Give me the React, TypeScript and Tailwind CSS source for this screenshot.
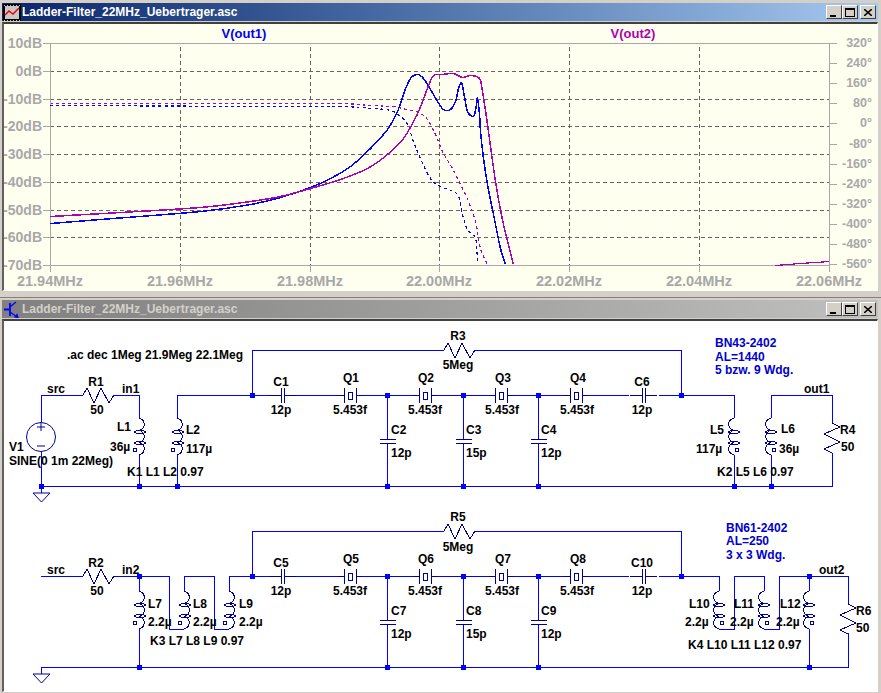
import type { ReactNode } from "react";

const WIRE = "#0000ff";
const PART = "#000090";
const NOTE = "#0000d0";
const AXIS = "#a8a8a8";
const GRID = "#646464";

type Pt = [number, number];

function smooth(pts: Pt[]) {
  let d = `M${pts[0][0]} ${pts[0][1]}`;
  for (let i = 0; i < pts.length - 1; i++) {
    const p0 = pts[Math.max(i - 1, 0)];
    const p1 = pts[i];
    const p2 = pts[i + 1];
    const p3 = pts[Math.min(i + 2, pts.length - 1)];
    const c1x = p1[0] + (p2[0] - p0[0]) / 6;
    const c1y = p1[1] + (p2[1] - p0[1]) / 6;
    const c2x = p2[0] - (p3[0] - p1[0]) / 6;
    const c2y = p2[1] - (p3[1] - p1[1]) / 6;
    d += ` C${c1x} ${c1y} ${c2x} ${c2y} ${p2[0]} ${p2[1]}`;
  }
  return d;
}

const blueDb: Pt[] = [[50, 222], [100, 218], [200, 210], [250, 203], [280, 196], [310, 186], [330, 177], [350, 165], [370, 147], [387, 128], [397, 110], [404, 90], [410, 77], [417, 73], [423, 77], [430, 88], [437, 100], [443, 108], [450, 108], [455, 100], [458, 87], [461, 81], [463, 90], [467, 110], [472, 115], [474, 113], [476, 103], [477, 97], [479, 113], [480, 130], [483, 157], [487, 183], [493, 213], [500, 247], [505, 263]];
const magentaDb: Pt[] = [[50, 215], [120, 211], [200, 206], [250, 200], [280, 195], [310, 187], [340, 178], [367, 167], [387, 153], [403, 137], [413, 120], [419, 108], [427, 87], [433, 74], [442, 73], [453, 72], [462, 76], [470, 74], [479, 77], [482, 90], [487, 123], [495, 180], [503, 223], [513, 263]];
const magentaPhase: Pt[] = [[50, 102], [280, 102], [340, 102], [370, 104], [393, 105], [402, 107], [418, 111], [427, 118], [435, 133], [442, 150], [452, 167], [462, 187], [468, 200], [475, 220], [480, 247], [487, 263]];
const bluePhase: Pt[] = [[50, 104], [280, 105], [340, 105], [373, 107], [390, 109], [400, 115], [407, 123], [413, 140], [419, 155], [430, 177], [440, 185], [457, 193], [462, 213], [467, 228], [475, 237], [477, 262]];

const dbLabels = ["10dB", "0dB", "-10dB", "-20dB", "-30dB", "-40dB", "-50dB", "-60dB", "-70dB"];
const phaseLabels = ["320°", "240°", "160°", "80°", "0°", "-80°", "-160°", "-240°", "-320°", "-400°", "-480°", "-560°"];
const freqLabels = ["21.94MHz", "21.96MHz", "21.98MHz", "22.00MHz", "22.02MHz", "22.04MHz", "22.06MHz"];

function Plot() {
  return (
    <svg width={873} height={266} viewBox="4 23 873 266" className="block font-['Liberation_Sans',sans-serif] font-bold">
      <g shapeRendering="crispEdges" fill="none">
        {dbLabels.map((_, i) => {
          const y = Math.round(42 + i * 27.75);
          const edge = i === 0 || i === 8;
          return (
            <g key={i}>
              <line x1={43} x2={50} y1={y} y2={y} stroke={AXIS} />
              <line x1={50} x2={829} y1={y} y2={y} stroke={edge ? AXIS : GRID} strokeDasharray={edge ? undefined : "4 3"} />
            </g>
          );
        })}
        {freqLabels.map((_, i) => {
          const x = Math.round(50 + i * 129.83);
          const edge = i === 0 || i === 6;
          return (
            <g key={i}>
              <line x1={x} x2={x} y1={264} y2={271} stroke={AXIS} />
              <line x1={x} x2={x} y1={edge ? 42 : 46} y2={264} stroke={edge ? AXIS : GRID} strokeDasharray={edge ? undefined : "4 3"} />
            </g>
          );
        })}
        {phaseLabels.map((_, i) => {
          const y = Math.round(42 + i * 20.1);
          return <line key={i} x1={829} x2={837} y1={y} y2={y} stroke={AXIS} />;
        })}
      </g>
      <g fill="none" shapeRendering="crispEdges" transform="translate(0.5 0.5)">
        <path d={smooth(bluePhase)} stroke="#0000ff" strokeWidth={1.2} strokeDasharray="3 3" />
        <path d={smooth(magentaPhase)} stroke="#b000b0" strokeWidth={1.2} strokeDasharray="3 3" />
        <path d={smooth(blueDb)} stroke="#0000ff" strokeWidth={1.5} />
        <path d={smooth(magentaDb)} stroke="#b000b0" strokeWidth={1.5} />
        <path d="M775 264 L800 262 L829 260" stroke="#b000b0" strokeWidth={1.2} />
      </g>
      {dbLabels.map((t, i) => (
        <text key={t} x={42} y={Math.round(42 + i * 27.75)} textAnchor="end" dominantBaseline="central" fontSize={14} fill={AXIS}>{t}</text>
      ))}
      {phaseLabels.map((t, i) => (
        <text key={t} x={872} y={Math.round(42 + i * 20.1)} textAnchor="end" dominantBaseline="central" fontSize={12.5} fill={AXIS}>{t}</text>
      ))}
      {freqLabels.map((t, i) => (
        <text key={t} x={Math.round(50 + i * 129.83)} y={280} textAnchor="middle" dominantBaseline="central" fontSize={14.5} fill={AXIS}>{t}</text>
      ))}
      <text x={244} y={32} textAnchor="middle" dominantBaseline="central" fontSize={13} fill="#0000ff">V(out1)</text>
      <text x={633} y={32} textAnchor="middle" dominantBaseline="central" fontSize={13} fill="#b000b0">V(out2)</text>
    </svg>
  );
}

function Junction({ x, y }: { x: number; y: number }) {
  return <rect x={x - 2} y={y - 2} width={5} height={5} fill={WIRE} />;
}

function Label({ x, y, c, note, children }: { x: number; y: number; c?: boolean; note?: boolean; children: ReactNode }) {
  return (
    <text x={x} y={y} textAnchor={c ? "middle" : "start"} dominantBaseline="central" fill={note ? NOTE : "#000"}>
      {children}
    </text>
  );
}

function ResistorH({ x, y }: { x: number; y: number }) {
  const p = [[0, 0], [4, -7], [11, 8], [18, -7], [26, 8], [31, 0]].map(([a, b]) => `${x + a},${y + b}`).join(" ");
  return <polyline points={p} fill="none" stroke={PART} shapeRendering="crispEdges" />;
}

function ResistorV({ x, y }: { x: number; y: number }) {
  const p = [[0, 0], [8, 4], [-8, 11], [8, 19], [-8, 26], [0, 30]].map(([a, b]) => `${x + a},${y + b}`).join(" ");
  return <polyline points={p} fill="none" stroke={PART} shapeRendering="crispEdges" />;
}

function Crystal({ x, y }: { x: number; y: number }) {
  return (
    <g fill="none" stroke={PART}>
      <line x1={x - 6} x2={x - 6} y1={y - 7} y2={y + 8} />
      <line x1={x + 6} x2={x + 6} y1={y - 7} y2={y + 8} />
      <rect x={x - 2} y={y - 3} width={4} height={7} />
      <line x1={x - 12} x2={x - 6} y1={y} y2={y} />
      <line x1={x + 6} x2={x + 12} y1={y} y2={y} />
    </g>
  );
}

function CapH({ x, y }: { x: number; y: number }) {
  return (
    <g stroke={PART} fill="none">
      <line x1={x - 1} x2={x - 1} y1={y - 7} y2={y + 8} />
      <line x1={x + 2} x2={x + 2} y1={y - 7} y2={y + 8} />
      <line x1={x - 13} x2={x - 1} y1={y} y2={y} />
      <line x1={x + 2} x2={x + 14} y1={y} y2={y} />
    </g>
  );
}

function CapV({ x, y }: { x: number; y: number }) {
  return (
    <g stroke={PART} fill="none">
      <line x1={x - 7} x2={x + 9} y1={y} y2={y} />
      <line x1={x - 7} x2={x + 9} y1={y + 4} y2={y + 4} />
    </g>
  );
}

// coil with the two coupling lenses and the phase dot, y = top of the winding
function Coil({ x, y, dir, h = 37 }: { x: number; y: number; dir: 1 | -1; h?: number }) {
  const s = h / 3;
  const sweep = dir === 1 ? 1 : 0;
  const arcs = [0, 1, 2].map((i) => `M${x} ${y + i * s} A8 ${s / 2 + 0.4} 0 0 ${sweep} ${x} ${y + (i + 1) * s}`).join(" ");
  const lx1 = dir === 1 ? x - 5 : x - 6;
  const lx2 = dir === 1 ? x + 7 : x + 6;
  const mid = (lx1 + lx2) / 2;
  const ly1 = y + 14;
  const ly2 = y + 25;
  const dotX = dir === 1 ? x - 4 : x + 3;
  return (
    <g fill="none" stroke={PART} shapeRendering="crispEdges">
      <path d={arcs} />
      <path d={`M${lx1} ${ly1} Q${mid} ${ly1 - 4} ${lx2} ${ly1} Q${mid} ${ly1 + 4} ${lx1} ${ly1}`} />
      <path d={`M${lx1} ${ly2} Q${mid} ${ly2 - 4} ${lx2} ${ly2} Q${mid} ${ly2 + 4} ${lx1} ${ly2}`} />
      <circle cx={dotX} cy={y + 32} r={1.7} />
    </g>
  );
}

const wires = [
  "M41 421V394H83", "M113 394H139V417", "M139 454V485", "M41 451V492", "M41 485H832V452", "M177 485V454", "M177 417V394H269",
  "M252 394V349H444", "M475 349H681V394", "M295 394H338", "M362 394H413", "M437 394H489", "M513 394H564", "M588 394H629", "M659 394H734V417",
  "M734 454V485", "M771 485V454", "M771 417V394H832V422",
  "M387 394V438", "M387 442V485", "M463 394V438", "M463 442V485", "M538 394V438", "M538 442V485",
  "M41 575H83", "M113 575H169V628H184", "M139 575V590", "M139 628V666", "M184 590V575H214V628H229", "M229 590V575H269",
  "M41 673V666H848V632", "M848 603V575H779V628H764", "M764 590V575H734V628H719", "M719 590V575H659",
  "M252 575V530H444", "M475 530H681V575", "M295 575H338", "M362 575H413", "M437 575H489", "M513 575H564", "M588 575H629",
  "M387 575V619", "M387 623V666", "M463 575V619", "M463 623V666", "M538 575V619", "M538 623V666",
  "M809 575V590", "M809 628V666",
];

const junctions: Pt[] = [
  [41, 485], [139, 485], [177, 485], [387, 485], [463, 485], [538, 485], [734, 485], [771, 485],
  [252, 394], [387, 394], [463, 394], [538, 394], [681, 394],
  [139, 575], [252, 575], [387, 575], [463, 575], [538, 575], [681, 575], [809, 575],
  [139, 666], [387, 666], [463, 666], [538, 666], [809, 666],
];

const crystals = [350, 425, 501, 576];
const shunts = [387, 463, 538];

function Schematic() {
  return (
    <svg width={873} height={370} viewBox="4 320 873 370" className="block font-['Liberation_Sans',sans-serif] font-bold text-[12px]">
      <g shapeRendering="crispEdges">
        <path d={wires.join(" ")} fill="none" stroke={WIRE} />
        {junctions.map(([x, y]) => <Junction key={`${x}-${y}`} x={x} y={y} />)}
        {[394, 575].map((y) => crystals.map((x) => <Crystal key={`${x}-${y}`} x={x} y={y} />))}
        {[282, 643].map((x) => [394, 575].map((y) => <CapH key={`${x}-${y}`} x={x} y={y} />))}
        {shunts.map((x) => [438, 619].map((y) => <CapV key={`${x}-${y}`} x={x} y={y} />))}
      </g>
      <ResistorH x={83} y={394} />
      <ResistorH x={83} y={575} />
      <ResistorH x={444} y={349} />
      <ResistorH x={444} y={530} />
      <ResistorV x={832} y={422} />
      <ResistorV x={848} y={603} />
      <Coil x={139} y={417} dir={1} />
      <Coil x={177} y={417} dir={1} />
      <Coil x={734} y={417} dir={-1} />
      <Coil x={771} y={417} dir={-1} />
      <Coil x={139} y={590} dir={1} h={38} />
      <Coil x={184} y={590} dir={1} h={38} />
      <Coil x={229} y={590} dir={1} h={38} />
      <Coil x={719} y={590} dir={-1} h={38} />
      <Coil x={764} y={590} dir={-1} h={38} />
      <Coil x={809} y={590} dir={-1} h={38} />

      <g fill="none" stroke={PART}>
        <circle cx={41} cy={436} r={14.5} />
        <path d="M37 426H45M41 422V430M37 445H45" />
        <path d="M33 492H50L41.5 501Z" />
        <path d="M33 673H50L41.5 682Z" />
      </g>

      <Label x={67} y={354}>.ac dec 1Meg 21.9Meg 22.1Meg</Label>
      <Label x={47} y={388}>src</Label>
      <Label x={96} y={381} c>R1</Label>
      <Label x={97} y={409} c>50</Label>
      <Label x={122} y={388}>in1</Label>
      <Label x={117} y={426}>L1</Label>
      <Label x={110} y={446}>36µ</Label>
      <Label x={186} y={429}>L2</Label>
      <Label x={186} y={448}>117µ</Label>
      <Label x={9} y={446}>V1</Label>
      <Label x={9} y={460}>SINE(0 1m 22Meg)</Label>
      <Label x={127} y={471}>K1 L1 L2 0.97</Label>
      <Label x={281} y={381} c>C1</Label>
      <Label x={281} y={409} c>12p</Label>
      <Label x={458} y={335} c>R3</Label>
      <Label x={458} y={364} c>5Meg</Label>
      <Label x={642} y={381} c>C6</Label>
      <Label x={642} y={409} c>12p</Label>
      {[["Q1", 351], ["Q2", 426], ["Q3", 503], ["Q4", 578]].map(([t, x]) => (
        <g key={t}>
          <Label x={x as number} y={377} c>{t}</Label>
          <Label x={(x as number) - 1} y={409} c>5.453f</Label>
        </g>
      ))}
      {[["C2", "12p", 391], ["C3", "15p", 466], ["C4", "12p", 541]].map(([t, v, x]) => (
        <g key={t}>
          <Label x={x as number} y={429}>{t}</Label>
          <Label x={x as number} y={452}>{v}</Label>
        </g>
      ))}
      <Label x={710} y={429}>L5</Label>
      <Label x={696} y={448}>117µ</Label>
      <Label x={781} y={428}>L6</Label>
      <Label x={779} y={448}>36µ</Label>
      <Label x={840} y={429}>R4</Label>
      <Label x={841} y={446}>50</Label>
      <Label x={804} y={388}>out1</Label>
      <Label x={717} y={471}>K2 L5 L6 0.97</Label>
      <Label x={715} y={342} note>BN43-2402</Label>
      <Label x={715} y={356} note>AL=1440</Label>
      <Label x={715} y={369} note>5 bzw. 9 Wdg.</Label>

      <Label x={47} y={569}>src</Label>
      <Label x={96} y={562} c>R2</Label>
      <Label x={97} y={590} c>50</Label>
      <Label x={122} y={569}>in2</Label>
      {[["L7", 148], ["L8", 193], ["L9", 239]].map(([t, x]) => (
        <g key={t}>
          <Label x={x as number} y={603}>{t}</Label>
          <Label x={x as number} y={621}>2.2µ</Label>
        </g>
      ))}
      <Label x={150} y={640}>K3 L7 L8 L9 0.97</Label>
      <Label x={281} y={562} c>C5</Label>
      <Label x={281} y={590} c>12p</Label>
      <Label x={458} y={516} c>R5</Label>
      <Label x={458} y={546} c>5Meg</Label>
      <Label x={642} y={562} c>C10</Label>
      <Label x={642} y={590} c>12p</Label>
      {[["Q5", 351], ["Q6", 426], ["Q7", 503], ["Q8", 578]].map(([t, x]) => (
        <g key={t}>
          <Label x={x as number} y={558} c>{t}</Label>
          <Label x={(x as number) - 1} y={590} c>5.453f</Label>
        </g>
      ))}
      {[["C7", "12p", 391], ["C8", "15p", 466], ["C9", "12p", 541]].map(([t, v, x]) => (
        <g key={t}>
          <Label x={x as number} y={610}>{t}</Label>
          <Label x={x as number} y={633}>{v}</Label>
        </g>
      ))}
      {[["L10", 689, 685], ["L11", 734, 730], ["L12", 780, 776]].map(([t, x, vx]) => (
        <g key={t}>
          <Label x={x as number} y={603}>{t}</Label>
          <Label x={vx as number} y={621}>2.2µ</Label>
        </g>
      ))}
      <Label x={688} y={644}>K4 L10 L11 L12 0.97</Label>
      <Label x={819} y={569}>out2</Label>
      <Label x={856} y={610}>R6</Label>
      <Label x={856} y={627}>50</Label>
      <Label x={726} y={527} note>BN61-2402</Label>
      <Label x={726} y={540} note>AL=250</Label>
      <Label x={726} y={554} note>3 x 3 Wdg.</Label>
    </svg>
  );
}

function PlotIcon() {
  return (
    <svg width={18} height={17} viewBox="0 0 18 17" shapeRendering="crispEdges">
      <rect width={18} height={17} fill="#000" />
      <rect x={2} y={2} width={14} height={13} fill="#c8c8c8" />
      {[0, 3, 6, 9, 12, 15].map((x) => (
        <g key={x}>
          <rect x={x + 1} y={0.5} width={1} height={1} fill="#c8c8c8" />
          <rect x={x + 1} y={15.5} width={1} height={1} fill="#c8c8c8" />
        </g>
      ))}
      <path d="M2 11L6 7L10 10L16 4" fill="none" stroke="#f00000" strokeWidth={1.5} shapeRendering="auto" />
    </svg>
  );
}

function SchematicIcon() {
  return (
    <svg width={18} height={17} viewBox="0 0 18 17" fill="none" stroke="#0000ff" strokeWidth={1.2}>
      <path d="M1 8.5H6M7 2V15" strokeWidth={1.8} />
      <path d="M7 6L13 1M7 11L14 16" />
      <path d="M12 16L15 16.5L14 13.5Z" fill="#0000ff" />
    </svg>
  );
}

function CtrlButton({ children, className = "" }: { children: ReactNode; className?: string }) {
  return (
    <div className={`w-[16px] h-[14px] flex items-center justify-center bg-[#d4d0c8] border border-t-white border-l-white border-r-[#404040] border-b-[#404040] ${className}`}>
      {children}
    </div>
  );
}

function TitleBar({ icon, active }: { icon: ReactNode; active?: boolean }) {
  return (
    <div
      className={`h-[18px] mx-[2px] mr-[3px] pl-[1px] pr-[2px] flex items-center bg-linear-to-r ${
        active ? "from-[#0a246a] to-[#a6caf0]" : "from-[#808080] to-[#c0c0c0]"
      }`}
    >
      {icon}
      <span className={`ml-[1px] font-['Liberation_Sans',sans-serif] font-bold text-[12px] leading-none whitespace-nowrap ${active ? "text-white" : "text-[#d4d0c8]"}`}>
        Ladder-Filter_22MHz_Uebertrager.asc
      </span>
      <div className="ml-auto flex items-center">
        <CtrlButton>
          <div className="w-[6px] h-[2px] bg-black mt-[7px] mr-[2px]" />
        </CtrlButton>
        <CtrlButton>
          <div className="w-[10px] h-[9px] border border-black border-t-2" />
        </CtrlButton>
        <CtrlButton className="ml-[2px]">
          <svg width={8} height={7} viewBox="0 0 8 7" stroke="#000" strokeWidth={1.5}>
            <path d="M0 0L8 7M8 0L0 7" />
          </svg>
        </CtrlButton>
      </div>
    </div>
  );
}

export default function App() {
  return (
    <div className="w-[881px] h-[693px] overflow-hidden bg-[#d4d0c8] flex flex-col">
      <div className="pt-[3px]">
        <TitleBar active icon={<PlotIcon />} />
        <div className="mt-[1px] ml-[2px] mr-[1px] w-fit border-t-2 border-l-2 border-r border-b border-t-[#404040] border-l-[#606060] border-r-white border-b-white bg-[#fffff0]">
          <Plot />
        </div>
      </div>
      <div className="mt-[6px] h-px bg-[#808080]" />
      <div className="pt-[2px]">
        <TitleBar icon={<SchematicIcon />} />
        <div className="mt-[1px] ml-[2px] mr-[1px] w-fit border-t-2 border-l-2 border-r border-b border-t-[#404040] border-l-[#606060] border-r-white border-b-white bg-white">
          <Schematic />
        </div>
      </div>
    </div>
  );
}
